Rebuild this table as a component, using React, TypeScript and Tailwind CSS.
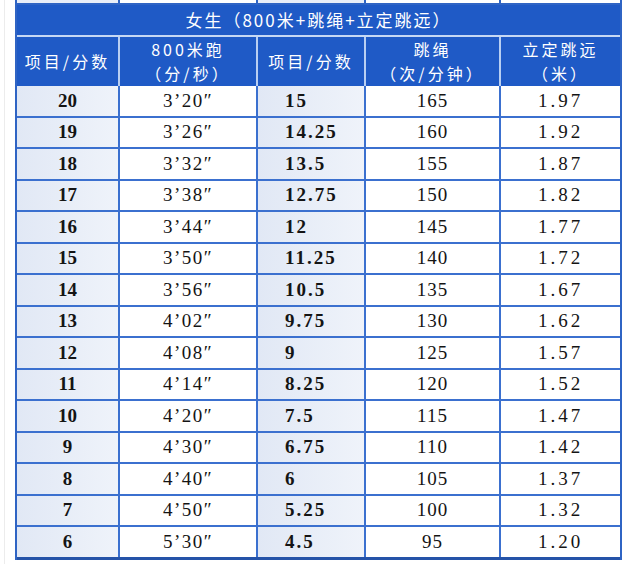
import React from "react";

const rows: [string, string, string, string, string][] = [
  ["20", "3’20″", "15", "165", "1.97"],
  ["19", "3’26″", "14.25", "160", "1.92"],
  ["18", "3’32″", "13.5", "155", "1.87"],
  ["17", "3’38″", "12.75", "150", "1.82"],
  ["16", "3’44″", "12", "145", "1.77"],
  ["15", "3’50″", "11.25", "140", "1.72"],
  ["14", "3’56″", "10.5", "135", "1.67"],
  ["13", "4’02″", "9.75", "130", "1.62"],
  ["12", "4’08″", "9", "125", "1.57"],
  ["11", "4’14″", "8.25", "120", "1.52"],
  ["10", "4’20″", "7.5", "115", "1.47"],
  ["9", "4’30″", "6.75", "110", "1.42"],
  ["8", "4’40″", "6", "105", "1.37"],
  ["7", "4’50″", "5.25", "100", "1.32"],
  ["6", "5’30″", "4.5", "95", "1.20"],
];

const cols = "grid grid-cols-[103px_138px_108px_135px_119px]";
const cjk = "font-['Noto_Sans_CJK_SC',sans-serif]";
const serif = "font-['Liberation_Serif','Noto_Sans_CJK_SC',serif]";

function HeaderCell({ lines, last }: { lines: string[]; last?: boolean }) {
  return (
    <div
      className={`flex flex-col items-center justify-center text-[16px] leading-[23.5px] tracking-[3px] text-white ${
        last ? "" : "border-r-2 border-[#b9cff2]"
      }`}
    >
      {lines.map((l) => (
        <span key={l}>{l}</span>
      ))}
    </div>
  );
}

export default function App() {
  return (
    <div className="h-[564px] w-[632px] overflow-hidden bg-white pl-[4px]">
      <div className="h-full border-l border-[#ececec] pl-[10px]">
        <div className={`w-[607px] border-x-2 border-[#2f64c4] ${cjk}`}>
          {/* tail of the table above */}
          <div className={`${cols} h-[5px] border-b-2 border-[#2f64c4]`}>
            <div className="border-r-2 border-[#2f64c4] bg-[#e9eef8]" />
            <div className="border-r-2 border-[#2f64c4]" />
            <div className="border-r-2 border-[#2f64c4] bg-[#e9eef8]" />
            <div className="border-r-2 border-[#2f64c4]" />
            <div />
          </div>

          <div className="flex h-[32px] items-center justify-center border-b-2 border-[#c6d8f4] bg-[#1f5ac6] text-[17px] tracking-[2px] text-white">
            女生（800米+跳绳+立定跳远）
          </div>

          <div className={`${cols} h-[49px] bg-[#1f5ac6]`}>
            <HeaderCell lines={["项目/分数"]} />
            <HeaderCell lines={["800米跑", "（分/秒）"]} />
            <HeaderCell lines={["项目/分数"]} />
            <HeaderCell lines={["跳绳", "（次/分钟）"]} />
            <HeaderCell lines={["立定跳远", "（米）"]} last />
          </div>

          {rows.map((r, i) => {
            const last = i === rows.length - 1;
            return (
              <div
                key={r[0]}
                className={`${cols} ${serif} text-[19px] text-[#141414] ${
                  last
                    ? "h-[32.5px] border-b-[3px] border-[#2553a8]"
                    : "h-[31.5px] border-b-2 border-[#3b70cf]"
                }`}
              >
                <div className="flex items-center justify-center border-r-2 border-[#3b70cf] bg-gradient-to-r from-[#e1e8f5] to-[#eff3fa] font-bold">
                  {r[0]}
                </div>
                <div className="flex items-center justify-center border-r-2 border-[#3b70cf] tracking-[1.5px]">
                  {r[1]}
                </div>
                <div className="flex items-center border-r-2 border-[#3b70cf] bg-gradient-to-r from-[#e1e8f5] to-[#eff3fa] pl-[27px] font-bold tracking-[2px]">
                  {r[2]}
                </div>
                <div className="flex items-center justify-center border-r-2 border-[#3b70cf] tracking-[1px]">
                  {r[3]}
                </div>
                <div className="flex items-center justify-center tracking-[3px]">
                  {r[4]}
                </div>
              </div>
            );
          })}
        </div>
      </div>
    </div>
  );
}
